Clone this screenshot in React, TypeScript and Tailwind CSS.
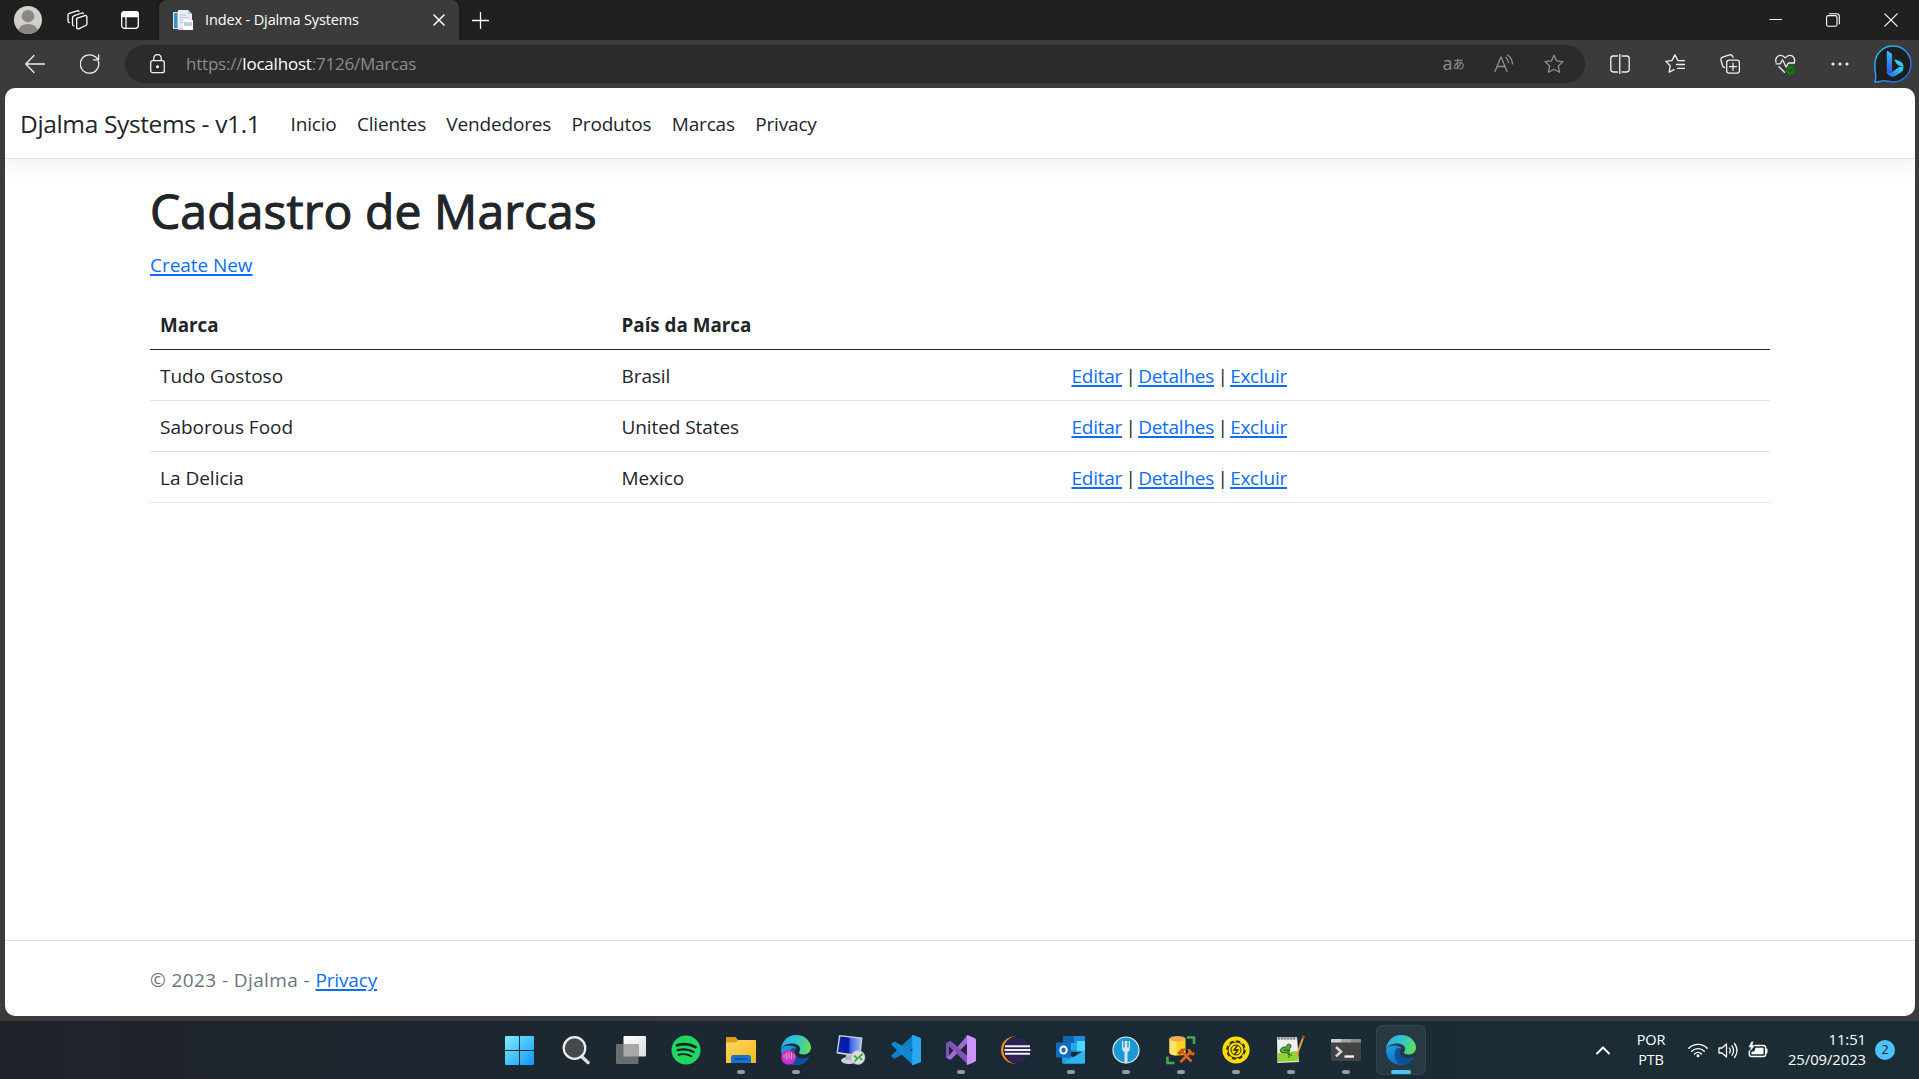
import React from "react";

type Box = { children?: React.ReactNode; w?: number; h?: number; vb?: string };

function Ico({ children, w = 20, h = 20, vb = "0 0 20 20" }: Box) {
  return (
    <svg width={w} height={h} viewBox={vb} fill="none" stroke="currentColor" strokeWidth={1.3} strokeLinecap="round" strokeLinejoin="round" className="block shrink-0">
      {children}
    </svg>
  );
}

const STAR = "M10 1.2 12.6 6.9 19 7.6 14.3 11.9 15.6 18.3 10 15.2 4.4 18.3 5.7 11.9 1 7.6 7.4 6.9Z";

function TitleBar() {
  return (
    <div className="flex h-10 items-center bg-[#202020] text-white">
      <div className="flex w-[159px] items-center pl-[14px]">
        <svg width="28" height="28" viewBox="0 0 28 28" className="block">
          <defs>
            <clipPath id="avatar"><circle cx="14" cy="14" r="14" /></clipPath>
          </defs>
          <g clipPath="url(#avatar)">
            <rect width="28" height="28" fill="#d1cfcc" />
            <circle cx="14" cy="10.2" r="6.2" fill="#8a8784" />
            <ellipse cx="14" cy="25" rx="10" ry="7" fill="#8a8784" />
          </g>
        </svg>
        <div className="ml-[25px]">
          <Ico w={21} h={20} vb="0 0 21 20">
            <path d="M9.6 8.3 18 5.6c1-.3 1.9.2 1.9 1.300v6.800c0 .9-.5 1.500-1.300 1.800l-6.900 3.300c-1.100.4-2-.1-2-1.300V9.800c0-.8.200-1.200-.1-1.500Z" />
            <path d="M6.800 15.800c-.8-.1-1.300-.7-1.300-1.600V7.700c0-.9.500-1.500 1.300-1.800l7.900-2.900c.7-.2 1.300 0 1.700.5" />
            <path d="M2.400 12.700c-.8-.2-1.400-.8-1.400-1.700V5.200c0-.9.500-1.600 1.300-1.900L10.200.8c.8-.2 1.400 0 1.800.6" />
          </Ico>
        </div>
        <div className="ml-[33px]">
          <Ico w={18} h={18} vb="0 0 18 18">
            <rect x=".7" y=".7" width="16.600" height="16.600" rx="2.800" />
            <path d="M.7 5.500V3.500C.7 2 2 .7 3.500.7h11c1.500 0 2.800 1.300 2.800 2.800v2Z" fill="currentColor" />
            <path d="M5 5.500v11.600" />
          </Ico>
        </div>
      </div>
      <div className="relative flex h-10 w-[300px] items-center rounded-t-lg bg-[#3b3b3b] pr-[14px] pl-[14px] shadow-[0_0_3px_#0008]">
        <svg width="20" height="20" viewBox="0 0 20 20" className="block">
          <rect x="0" y="2" width="5" height="17" fill="#dfe9f2" />
          <rect x="1" y="3" width="3.500" height="15" fill="#3d8fc7" />
          <path d="M5 0h10l4 4v15H5z" fill="#e9edf3" />
          <path d="M15 0v4h4z" fill="#b9c6d4" />
          <path d="M7 5h6M7 7.500h9M7 10h3M7 12.500h3" stroke="#b5c2cf" strokeWidth=".9" />
          <rect x="10" y="10" width="10" height="10" fill="#f8fafc" />
          <rect x="11" y="12" width="8" height="4" fill="#c3cdd8" />
          <rect x="5" y="18" width="5" height="2" fill="#cfd8e1" />
        </svg>
        <span className="ml-[12px] flex-1 whitespace-nowrap text-[14.500px] tracking-[-0.130px]">Index - Djalma Systems</span>
        <Ico w={12} h={12} vb="0 0 12 12"><path d="m1 1 10 10M11 1 1 11" strokeWidth="1.500" /></Ico>
      </div>
      <div className="ml-[13px]">
        <Ico w={17} h={17} vb="0 0 17 17"><path d="M8.500.5v16M.5 8.500h16" strokeWidth="1.300" /></Ico>
      </div>
      <div className="ml-auto flex items-center pr-[21px]">
        <Ico w={14} h={14} vb="0 0 14 14"><path d="M.5 6.500h12.500" strokeWidth="1" strokeLinecap="butt" /></Ico>
        <div className="ml-[43px]">
          <Ico w={14} h={14} vb="0 0 14 14">
            <rect x=".6" y="2.600" width="10.400" height="10.600" rx="1.800" strokeWidth="1.100" />
            <path d="M3.400.7h7.200c1.600 0 2.700 1.100 2.700 2.700v7.300" strokeWidth="1.100" />
          </Ico>
        </div>
        <div className="ml-[44px]">
          <Ico w={14} h={14} vb="0 0 14 14"><path d="m.8.800 12.400 12.400M13.200.8.800 13.200" strokeWidth="1.200" /></Ico>
        </div>
      </div>
    </div>
  );
}

function Toolbar() {
  return (
    <div className="relative flex h-12 items-center bg-[#3b3b3b] text-[#f0f0f0]">
      <div className="ml-[25px]">
        <Ico><path d="M19.500 10H.8M9 1.500.8 10 9 18.500" strokeWidth="1.300" /></Ico>
      </div>
      <div className="ml-[35px]">
        <Ico><path d="M18.400 7.500A9.200 9.200 0 1 1 15.500 3l3 2.600M18.600.8v5h-5.200" /></Ico>
      </div>
      <div className="ml-[25px] flex h-[38px] w-[1460px] items-center rounded-full bg-[#2b2b2b] pr-[21px] pl-[25px]">
        <Ico w={15} h={20} vb="0 0 15 20">
          <rect x=".7" y="6.700" width="13.600" height="12" rx="2" />
          <path d="M3.800 6.500V4.200a3.700 3.700 0 0 1 7.400 0v2.300" />
          <circle cx="7.500" cy="12.700" r=".9" fill="currentColor" />
        </Ico>
        <span className="ml-[21px] whitespace-nowrap text-[17px] tracking-[-0.210px] text-[#8b8b8b]">
          https://<span className="text-white">localhost</span>:7126/Marcas
        </span>
        <div className="ml-auto flex items-center text-[#8f8f8f]">
          <span className="mr-[29px] flex items-center whitespace-nowrap pb-[2px]"><span className="font-['Open_Sans'] text-[18px] leading-5">a</span><span className="pt-px font-['Noto_Sans_CJK_JP'] text-[12.500px] leading-5">あ</span></span>
          <Ico>
            <path d="M1 17.500 7 2.800l6 14.700M3 12.500h8" />
            <path d="M12 3.500c1.500 1.300 2.300 3 2.500 5M13.500.8c3 2.200 4.800 5 5 9" />
          </Ico>
          <div className="ml-[30px]"><Ico><path d={STAR} strokeWidth="1.300" /></Ico></div>
        </div>
      </div>
      <div className="ml-[25px]">
        <Ico>
          <path d="M7.500 2H3.200C1.800 2 .8 3 .8 4.400v11.200C.8 17 1.800 18 3.200 18h4.300M12 2h4.800c1.400 0 2.400 1 2.400 2.400v11.200c0 1.400-1 2.400-2.400 2.400H12M9.800.3v19.400" strokeWidth="1.300" />
        </Ico>
      </div>
      <div className="ml-[35px]">
        <Ico>
          <path d="M13 6.600 9.900.9 6.900 6.600.8 7.400l4.400 4.300-1 6.400 4.900-2.500M13 6.700h6.500M11.500 10.500h8M12.500 14.300h7" />
        </Ico>
      </div>
      <div className="ml-[35px]">
        <Ico>
          <rect x="6.700" y="6.200" width="12.700" height="13" rx="2.400" />
          <path d="M13 9.200v7M9.500 12.700h7M4.500 13.500C3.300 13.300 2.800 12.500 2.500 11.500L.9 6c-.3-1.400.4-2.500 1.700-2.900L9.500.9c1.400-.4 2.700.2 3.200 1.500l.3 1" />
        </Ico>
      </div>
      <div className="ml-[35px]">
        <Ico w={22} h={21} vb="0 0 22 21">
          <path d="M1 8C0 4.500 2.300 1.300 5.500 1.300c2 0 3.500 1 4.700 2.500 1.200-1.500 2.700-2.500 4.700-2.500 3.200 0 5.500 3.200 4.500 6.700M1 9.800h4.200l2.300-4 3.600 7.200 2.300-4h6M4 12.700l5.500 5.500" />
          <circle cx="15.600" cy="16" r="4.500" fill="#0f7b0f" stroke="none" />
          <path d="m13.600 16 1.400 1.400 2.500-2.600" stroke="#083f08" strokeWidth="1" />
        </Ico>
      </div>
      <div className="ml-[34px]">
        <Ico w={18} h={4} vb="0 0 18 4">
          <g fill="currentColor" stroke="none"><circle cx="2" cy="2" r="1.600" /><circle cx="9" cy="2" r="1.600" /><circle cx="16" cy="2" r="1.600" /></g>
        </Ico>
      </div>
      <div className="ml-[25px]">
        <svg width="38" height="38" viewBox="0 0 38 38" className="block">
          <defs>
            <linearGradient id="ring" x1="0" y1="0" x2="1" y2="1"><stop offset="0" stopColor="#1cc8e8" /><stop offset=".5" stopColor="#3292f0" /><stop offset="1" stopColor="#1a5fe0" /></linearGradient>
            <linearGradient id="bv" x1="0" y1="0" x2="0" y2="1"><stop offset="0" stopColor="#41b5f5" /><stop offset="1" stopColor="#2b58ea" /></linearGradient>
            <linearGradient id="bb" x1="0" y1="1" x2="1" y2="0"><stop offset="0" stopColor="#2563eb" /><stop offset="1" stopColor="#2fe0f0" /></linearGradient>
          </defs>
          <path d="M1 37c1-2.500.8-5 .6-8C.9 26 .8 22 1 19A18 18 0 1 1 19 37c-4 0-6-1.500-9-1.200-3.500.2-6 1.200-9 1.200Z" fill="#1e1e1e" stroke="url(#ring)" strokeWidth="1.500" />
          <path d="M12.800 6.300c0-.5.400-.7.900-.4l3.600 2.300c.5.400.8.900.8 1.600v16.700l-3.200 2c-1.200.5-2.100-.3-2.100-1.500Z" fill="url(#bv)" />
          <path d="M20.500 15.200c0-.7.600-.9 1.200-.6l4.600 2c2.200 1 3.400 3 3.200 5.500-3-1.500-5-1-7-3.300Z" fill="#2fd2ec" />
          <path d="M12.800 27c1.500 1.800 3.800 1.200 5.300 0l5.600-4c2.300-1.500 5.600-1.600 5.700-.3 0 2.300-1.200 4-3 5.100l-5.300 3.100c-1.700 1-3.700 1-5.300-.1-1.800-1.100-3-2.100-3-3.800Z" fill="url(#bb)" />
        </svg>
      </div>
    </div>
  );
}

const rows = [
  ["Tudo Gostoso", "Brasil"],
  ["Saborous Food", "United States"],
  ["La Delicia", "Mexico"],
];

function Link({ children }: Box) {
  return <a className="text-[#0d6efd] underline decoration-[2px] underline-offset-[1.500px]">{children}</a>;
}

function Pipe() {
  return <span className="tracking-[-1.400px]"> | </span>;
}

function Page() {
  return (
    <div className="mr-[4px] ml-[5px] flex h-[928px] flex-col overflow-hidden rounded-[10px] bg-white text-[19px] text-[#212529]">
      <nav className="flex h-[71px] shrink-0 items-center whitespace-nowrap border-b border-[#dee2e6] pt-[3px] pl-[15px] shadow-[0_10px_20px_rgba(0,0,0,0.05)]">
        <span className="w-[270.500px] text-[24.500px] tracking-[-0.360px]">Djalma Systems - v1.1</span>
        <div className="flex gap-[20.300px] tracking-[-0.160px]">
          {["Inicio", "Clientes", "Vendedores", "Produtos", "Marcas", "Privacy"].map((n) => <a key={n}>{n}</a>)}
        </div>
      </nav>
      <main className="ml-[145px] w-[1620px] flex-1">
        <h1 className="mt-[22px] h-[60px] text-[48px] leading-[60px] tracking-[0.120px] [-webkit-text-stroke:1.1px_#212529]">Cadastro de Marcas</h1>
        <p className="mt-[9px] h-[30px] leading-[30px] tracking-[-0.050px]"><Link>Create New</Link></p>
        <table className="mt-[20px] w-full table-fixed border-collapse text-left">
          <colgroup><col className="w-[461px]" /><col className="w-[450px]" /><col /></colgroup>
          <thead>
            <tr className="h-[49px] border-b border-[#212529] text-[18.800px] font-bold">
              <th className="px-[10px] pt-[2px]">Marca</th>
              <th className="px-[10.500px] pt-[2px]">País da Marca</th>
              <th />
            </tr>
          </thead>
          <tbody>
            {rows.map(([m, p]) => (
              <tr key={m} className="h-[51px] border-b border-[#dee2e6]">
                <td className="px-[10px] pt-[4px]">{m}</td>
                <td className="px-[10.500px] pt-[4px] tracking-[-0.080px]">{p}</td>
                <td className="px-[10.500px] pt-[4px] tracking-[-0.260px]"><Link>Editar</Link><Pipe /><Link>Detalhes</Link><Pipe /><Link>Excluir</Link></td>
              </tr>
            ))}
          </tbody>
        </table>
      </main>
      <footer className="flex h-[76px] shrink-0 items-center border-t border-[#dee2e6] pl-[145px] text-[#6c757d]">
        <p className="pt-[4px] tracking-[0.400px]">© 2023 - Djalma - <span className="tracking-[-0.150px]"><Link>Privacy</Link></span></p>
      </footer>
    </div>
  );
}

function EdgeLogo({ dev = false }: { dev?: boolean }) {
  return (
    <svg width="30" height="30" viewBox="0 0 30 30" className="block">
      <defs>
        <linearGradient id="eg1" x1="0" y1=".3" x2="1" y2=".5"><stop offset="0" stopColor="#2aaee6" /><stop offset=".5" stopColor="#2fc5d0" /><stop offset="1" stopColor="#5fe05a" /></linearGradient>
        <linearGradient id="eg2" x1="0" y1="0" x2=".7" y2="1"><stop offset="0" stopColor="#1ea2e4" /><stop offset="1" stopColor="#0b61b8" /></linearGradient>
        <radialGradient id="pk"><stop offset="0" stopColor="#b25cf5" /><stop offset="1" stopColor="#d31fc4" /></radialGradient>
      </defs>
      <path d="M0 15C0 24 7 30 15 30c5.500 0 10-2.500 12.700-7-9 3.500-14.700-1-14.200-6 .1-2 1-3 2-4-3-3.500-14-4-15.500 2Z" fill="url(#eg2)" />
      <path d="M10.500 13.500C7 18 8.500 28 16 30c5.500-.2 9.700-3 12-7.500.2-.5-.3-.8-.8-.5-7 3.500-14.200-.5-13.700-5.500.1-1.500.8-2.500 1.800-3.500Z" fill="#0c4f9c" />
      <path d="M0 14.500C.5 6 7 0 15 0c9 0 15 6.500 15 12.500 0 4-3 7-7 7-3.500 0-5-1-5-2 0-.8 1.200-1.200 1.200-3.500 0-3-3.200-5.500-8-5.500C6 8.500 1.500 10.500 0 14.500Z" fill="url(#eg1)" />
      {dev && (
        <g>
          <circle cx="7.500" cy="22.500" r="7.300" fill="url(#pk)" />
          <path d="M3 23v-4M5.500 24.500v-7M8 23v-6M10.500 24.500v-7M13 23v-4" stroke="#f59a6e" strokeWidth="1" />
        </g>
      )}
    </svg>
  );
}

function Svg({ children }: Box) {
  return <svg width="30" height="30" viewBox="0 0 30 30" className="block">{children}</svg>;
}

const apps: { run?: boolean; active?: boolean; icon: React.ReactNode }[] = [
  {
    icon: (
      <Svg>
        <defs><linearGradient id="win" gradientUnits="userSpaceOnUse" x1="0" y1="0" x2="30" y2="30"><stop offset="0" stopColor="#80efff" /><stop offset="1" stopColor="#0c95fb" /></linearGradient></defs>
        <path d="M0 2q0-1 1-1h13v14H0zM15 1h13q1 0 1 1v13H15zM0 16h14v14H1q-1 0-1-1zM15 16h14v13q0 1-1 1H15z" fill="url(#win)" />
      </Svg>
    ),
  },
  {
    icon: (
      <Svg>
        <path d="m19.500 20.500 7.500 7" stroke="#d9dcdf" strokeWidth="3.400" strokeLinecap="round" />
        <circle cx="13.500" cy="13" r="10.800" fill="#45494e" stroke="#eceeef" strokeWidth="2.200" />
      </Svg>
    ),
  },
  {
    icon: (
      <Svg>
        <defs><linearGradient id="tv" x1="0" y1="0" x2="1" y2="1"><stop offset="0" stopColor="#fff" /><stop offset="1" stopColor="#dcdcdc" /></linearGradient></defs>
        <rect x="7.500" y="1" width="22.500" height="20.500" rx="1" fill="url(#tv)" />
        <rect x="0" y="9" width="22.500" height="20" rx="1" fill="#6b6c6e" />
        <path d="M7.500 9h15v12.500h-15z" fill="#a7a8a9" />
      </Svg>
    ),
  },
  {
    icon: (
      <Svg>
        <circle cx="15" cy="15" r="14.500" fill="#1ed760" />
        <path d="M6 10.300c6-1.800 13-1.300 18.500 1.800" stroke="#171f22" strokeWidth="2.800" strokeLinecap="round" fill="none" />
        <path d="M6.700 15.200c5.500-1.500 11-1 16 1.800" stroke="#171f22" strokeWidth="2.300" strokeLinecap="round" fill="none" />
        <path d="M7.500 19.700c5-1.100 9-.6 13 1.600" stroke="#171f22" strokeWidth="1.900" strokeLinecap="round" fill="none" />
      </Svg>
    ),
  },
  {
    run: true,
    icon: (
      <Svg>
        <defs><linearGradient id="fo" x1="0" y1="0" x2="1" y2="1"><stop offset="0" stopColor="#ffd767" /><stop offset="1" stopColor="#fdb813" /></linearGradient></defs>
        <path d="M0 3q0-1 1-1h8.500l3 3.500H29q1 0 1 1V10H0z" fill="#e09f0c" />
        <path d="M0 7.500h9.500L12.500 5H29q1 0 1 1v22H0z" fill="url(#fo)" />
        <path d="M5 28v-5.500q0-2.500 2.500-2.500h15q2.500 0 2.500 2.500V28z" fill="#1276d0" />
        <path d="M8.500 24h13" stroke="#0a4b94" strokeWidth="1.500" />
      </Svg>
    ),
  },
  { run: true, icon: <EdgeLogo dev /> },
  {
    icon: (
      <Svg>
        <defs><linearGradient id="rdp" x1="0" y1="0" x2="1" y2="0"><stop offset="0" stopColor="#0a21b8" /><stop offset=".45" stopColor="#0718a0" /><stop offset=".55" stopColor="#3f66e4" /><stop offset="1" stopColor="#9db8f5" /></linearGradient></defs>
        <ellipse cx="13" cy="25.500" rx="8" ry="3.500" fill="#cfd2d4" />
        <path d="M10 20h6l1 5H9z" fill="#b4b7ba" />
        <path d="M3 0 26.500 2.500 24.500 22 .5 18.500Z" fill="#cdd1d5" />
        <path d="M4.300 1.500 25 3.800 23.300 20 2 17Z" fill="url(#rdp)" />
        <circle cx="22" cy="22.500" r="7" fill="#dedfdd" stroke="#aeb0ae" strokeWidth=".6" />
        <path d="m18 20.500 3.500 3-3 3M26.500 19l-3.500 3 3 3" stroke="#39a344" strokeWidth="1.700" fill="none" />
      </Svg>
    ),
  },
  {
    icon: (
      <Svg>
        <path d="M22 0 30 3v6L4 23.500q-.6.400-1.200 0L.5 21.500q-.6-.6 0-1.200Z" fill="#0f7fc9" />
        <path d="M22 30 30 27v-6L4 6.700q-.6-.4-1.200 0L.5 8.700q-.6.600 0 1.200Z" fill="#1186d2" />
        <path d="M22 0 29 2.800q1 .5 1 1.500v21.400q0 1-1 1.500L22 30q-1 .2-1.500-.6.800.2.800-.8V1.400q0-1-.8-.8.600-.8 1.500-.6Z" fill="#29a7f2" />
      </Svg>
    ),
  },
  {
    run: true,
    icon: (
      <Svg>
        <path fillRule="evenodd" d="M0 8.500 3.500 6.500Q4.700 6 5.500 7L11.500 12 21 .5V8.500L5.500 24Q4.700 25 3.500 24.500L0 22.500ZM3 11v9.500L7.500 15.500Z" fill="#a06bd8" />
        <path d="M0 8.500 3.500 6.500Q4.700 6 5.500 7L22 21v9L3 10.500V20.500L0 22.500Z" fill="#8150bb" />
        <path d="M20.500.3Q21 0 22 .3L29 3.300q1 .5 1 1.500v20.400q0 1-1 1.500l-7 3q-1 .3-1.500-.2.500-.5.500-1.500V2q0-1-.5-1.700Z" fill="#cd94fa" />
        <path d="M21 9.500v11L14.500 15Z" fill="#202a36" />
      </Svg>
    ),
  },
  {
    icon: (
      <Svg>
        <circle cx="13.500" cy="15" r="13.500" fill="#f7941e" />
        <circle cx="16" cy="15" r="13.300" fill="#2c2255" stroke="#1e2230" strokeWidth="1" />
        <path d="M4 11.300h25M3.500 15h26M4 18.700h25" stroke="#f0eef6" strokeWidth="2" />
      </Svg>
    ),
  },
  {
    run: true,
    icon: (
      <Svg>
        <path d="M8 1h20q1 0 1 1v15H7V2q0-1 1-1z" fill="#1c8ae0" />
        <path d="M7 1h11v7H7z" fill="#1166b4" />
        <path d="M14 8h7v7h-7z" fill="#28a8ea" />
        <path d="M21 6h8v10h-8z" fill="#50d9ff" />
        <path d="M6 15 17.500 22.500 29 15v12.500q0 1-1 1H7q-1 0-1-1z" fill="#1b9de2" />
        <path d="M29 15 7 28.500h21q1 0 1-1z" fill="#30b5f2" />
        <rect x="0" y="7.500" width="15" height="15" rx="1.200" fill="#0f6cbd" />
        <ellipse cx="7.500" cy="15" rx="3.200" ry="3.600" fill="none" stroke="#fff" strokeWidth="2" />
      </Svg>
    ),
  },
  {
    run: true,
    icon: (
      <Svg>
        <circle cx="15" cy="15" r="13" fill="#199ad6" stroke="#e5eef3" strokeWidth="1.200" />
        <path d="M11 6v7q0 3 2.500 4v10q0 1.500 1.500 1.500t1.500-1.500V17q2.500-1 2.500-4V6" fill="#d5e4ec" />
        <path d="M13 6v6.500M17 6v6.500" stroke="#199ad6" strokeWidth="1.400" />
      </Svg>
    ),
  },
  {
    run: true,
    icon: (
      <Svg>
        <path d="M21 2.500h7v6.500M1.500 21.500v6.500h7" stroke="#4ba54f" strokeWidth="2.600" fill="none" />
        <path d="M3.500 3.500v14q0 3 8 3t8-3v-14z" fill="#fcd41c" />
        <path d="M3.500 3.500v14q0 2.500 7 3v-17z" fill="#ffe36b" />
        <ellipse cx="11.500" cy="3.800" rx="8" ry="2.800" fill="#f0a95a" />
        <path d="m14.500 27 11-11M15.500 16.500 25.500 26.500" stroke="#e0651b" strokeWidth="2.700" />
        <path d="m11 18 4.500-4.500h5L14 20.500Z" fill="#c9551a" />
        <path d="M23 14v4l4 1.500 1-2" stroke="#e0651b" strokeWidth="2" fill="none" />
      </Svg>
    ),
  },
  {
    run: true,
    icon: (
      <Svg>
        <circle cx="15" cy="15" r="13.600" fill="#fbdc05" />
        <circle cx="15" cy="15" r="9" fill="none" stroke="#2f2d0a" strokeWidth="1.600" strokeDasharray="4.200 2.869" />
        <circle cx="15" cy="15" r="8" fill="none" stroke="#2f2d0a" strokeWidth="1" />
        <circle cx="15" cy="15" r="5" fill="none" stroke="#2f2d0a" strokeWidth="1" />
        <path d="m16.500 10.500-3.500 4.500h4l-3.500 4.500" fill="none" stroke="#2f2d0a" strokeWidth="1.300" />
      </Svg>
    ),
  },
  {
    run: true,
    icon: (
      <Svg>
        <path d="M1 2h20l2 25-21.500 1z" fill="#eef1ee" />
        <path d="M1 2h20v2.500H1z" fill="#bfc4c1" />
        <path d="M3 2v3M6 2v3M9 2v3M12 2v3M15 2v3M18 2v3" stroke="#555" strokeWidth=".8" />
        <path d="M2 18 21.500 16 22.500 26 2 27z" fill="#8fd435" />
        <path d="M4 15q2-4 6-3 1-3.500 3.500-3 2 .5 1.500 3-1.500 1-1.500 4-4 3-6.500 1.500-3 .5-3-2.500Z" fill="#57a63a" stroke="#1f3d17" strokeWidth=".7" />
        <path d="m8 15 6 .5M11 18.500l5 2M13 17v6" stroke="#1f3d17" strokeWidth=".8" />
        <path d="M27.500 1.500 20 22" stroke="#e9a53a" strokeWidth="2" />
        <path d="m28 .5-1.300 3.200" stroke="#a8452d" strokeWidth="2.200" />
      </Svg>
    ),
  },
  {
    run: true,
    icon: (
      <Svg>
        <rect x="0" y="4" width="30" height="22" rx="1" fill="#434346" />
        <path d="M1 4h9v3.500H0V5q0-1 1-1z" fill="#d0d0d2" />
        <path d="M10 4h10v3.500H10z" fill="#a5a5a8" />
        <path d="M20 4h9q1 0 1 1v2.500H20z" fill="#8a8a8e" />
        <path d="m5 12 5 4.700-5 4.700" stroke="#d6d6d6" strokeWidth="2.600" fill="none" />
        <path d="M13.500 21.500H23" stroke="#f2f2f2" strokeWidth="2.400" />
      </Svg>
    ),
  },
  { run: true, active: true, icon: <EdgeLogo /> },
];

function Taskbar() {
  return (
    <div className="relative mt-[5px] flex h-[58px] items-center bg-gradient-to-r from-[#1f2229] via-[#1a2a35] to-[#1b2d34] text-white">
      <div className="ml-[492.500px] flex h-full items-center">
        {apps.map((a, i) => (
          <div key={i} className="flex h-full w-[55px] items-center justify-center first:mr-px">
            <div className={a.active ? "relative flex h-[50px] w-[50px] items-center justify-center rounded-md border border-[#33454e] bg-[#273942]" : "relative flex h-[50px] w-[50px] items-center justify-center"}>
              {a.icon}
              {a.run && <span className={a.active ? "absolute bottom-0 h-1 w-5 rounded-full bg-[#4cc2ff]" : "absolute bottom-px h-1 w-2 rounded-full bg-[#959ca1]"} />}
            </div>
          </div>
        ))}
      </div>
      <div className="absolute top-0 right-0 flex h-full w-[326px] items-center">
        <div className="ml-[3px]"><Ico w={14} h={9} vb="0 0 14 9"><path d="m1 7.500 6-6 6 6" strokeWidth="1.900" /></Ico></div>
        <div className="ml-[22px] w-[38px] text-center text-[14.500px] leading-[20px] tracking-[-0.200px]">POR<br />PTB</div>
        <div className="ml-[18px]">
          <Ico w={20} h={16} vb="0 0 20 16">
            <path d="M.8 6.200a13 13 0 0 1 18.400 0M3.700 9.200a9 9 0 0 1 12.600 0M6.500 12a5 5 0 0 1 7 0" strokeWidth="1.400" />
            <circle cx="10" cy="13.800" r="1.500" fill="currentColor" stroke="none" />
          </Ico>
        </div>
        <div className="ml-[10px]">
          <Ico w={20} h={17} vb="0 0 20 17">
            <path d="M1 6v5h3l4.500 4V2L4 6ZM11.500 6q1.600 2.500 0 5M14 3.800q3.200 4.700 0 9.400M16.500 1.500q5 7 0 14" strokeWidth="1.300" />
          </Ico>
        </div>
        <div className="ml-[10px]">
          <Ico w={20} h={18} vb="0 0 20 18">
            <path d="M7 4.500h8.500q2.200 0 2.200 2.200v6.600q0 2.200-2.200 2.200H3.500q-2.200 0-2.200-2.200V10" strokeWidth="1.400" />
            <path d="M7.500 6.700h8v6.600h-12v-2.500l3-.5Z" fill="currentColor" stroke="none" />
            <path d="M18.500 8.500v3" strokeWidth="2" />
            <path d="M3.500 1 1 6h2.200L2.500 9.500 6.500 4.500H4L5 1Z" fill="currentColor" strokeWidth=".5" />
          </Ico>
        </div>
        <div className="ml-auto w-[90px] whitespace-nowrap pb-[2px] text-right text-[14.800px] leading-[20px] tracking-[-0.050px]">11:51<br />25/09/2023</div>
        <div className="mr-[24px] ml-[9px] flex h-[20px] w-[20px] items-center justify-center rounded-full bg-[#4cc2ff] text-[12.500px] text-[#12242e]">2</div>
      </div>
    </div>
  );
}

export default function App() {
  return (
    <div className="h-[1079px] w-[1919px] overflow-hidden bg-[#3b3b3b] font-['Open_Sans','Noto_Sans',sans-serif]">
      <TitleBar />
      <Toolbar />
      <Page />
      <Taskbar />
    </div>
  );
}
